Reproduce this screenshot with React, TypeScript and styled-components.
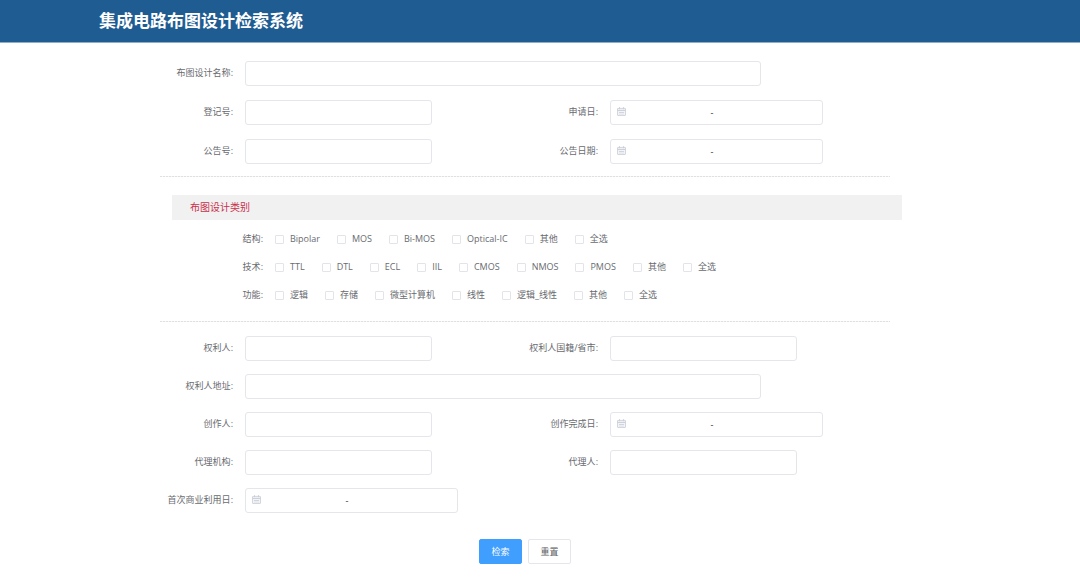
import React from "react";
import styled, { createGlobalStyle } from "styled-components";

const GlobalStyle = createGlobalStyle`
  *, *::before, *::after { box-sizing: border-box; }
  body {
    margin: 0;
    background: #fff;
    color: #696b70;
    font-family: "Open Sans", "Noto Sans CJK SC", sans-serif;
    font-size: 9px;
    line-height: 14px;
  }
  input, button { font: inherit; color: inherit; }
`;

const Header = styled.header`
  background: #1f5c92;
  border-bottom: 1px solid #8fadc8;
`;

const HeaderInner = styled.div`
  max-width: 882px;
  margin: 0 auto;
`;

const Title = styled.h1`
  margin: 0;
  color: #fff;
  font-size: 17px;
  line-height: 42px;
  font-weight: 700;
`;

const Form = styled.form`
  max-width: 884px;
  margin: 0 auto;
  padding: 18px 92px 18px 62px;
`;

const FieldGroup = styled.div<{ $gap: number }>`
  display: flex;
  flex-direction: column;
  gap: ${(p) => p.$gap}px;
`;

const FieldRow = styled.div<{ $wide?: boolean }>`
  display: grid;
  grid-template-columns: ${(p) => (p.$wide ? "1fr" : "1fr 1fr")};
`;

const Field = styled.div`
  display: grid;
  grid-template-columns: 85px minmax(0, 1fr);
  align-items: center;
`;

const FieldLabel = styled.label`
  padding: 0 12px 2px 0;
  text-align: right;
  white-space: nowrap;
`;

const TextInput = styled.input<{ $wide?: boolean }>`
  width: ${(p) => (p.$wide ? "80%" : "100%")};
  max-width: ${(p) => (p.$wide ? "none" : "187px")};
  height: 25px;
  padding: 0 9px;
  border: 1px solid #e4e6ec;
  border-radius: 3px;
  background: #fff;
  outline: none;
  &:focus { border-color: #409eff; }
`;

const RangeBox = styled.div`
  display: flex;
  align-items: center;
  width: 100%;
  max-width: 213px;
  height: 25px;
  padding: 0 24px 2px 6px;
  border: 1px solid #e4e6ec;
  border-radius: 3px;
  background: #fff;
`;

const RangeInput = styled.input`
  flex: 1;
  min-width: 0;
  padding: 0;
  border: 0;
  background: transparent;
  text-align: center;
  outline: none;
`;

const RangeSeparator = styled.span`
  width: 9px;
  padding-top: 2px;
  color: #303133;
  text-align: center;
`;

const Divider = styled.hr<{ $top: number; $bottom: number }>`
  height: 1px;
  margin: ${(p) => p.$top}px 0 ${(p) => p.$bottom}px;
  border: 0;
  background: repeating-linear-gradient(90deg, #e0e0e0 0 2px, #f6f6f6 2px 3px);
`;

const SectionTitle = styled.h2`
  margin: 0 -12px 12px 12px;
  padding-left: 18px;
  background: #f1f1f1;
  color: #c9304d;
  font-size: 10px;
  line-height: 25px;
  font-weight: 400;
`;

const OptionGroups = styled.div`
  display: flex;
  flex-direction: column;
  gap: 14px;
`;

const OptionRow = styled.div`
  display: flex;
  align-items: center;
`;

const OptionCaption = styled.span`
  width: 103px;
  margin-right: 12px;
  text-align: right;
`;

const Options = styled.div`
  display: flex;
  flex-wrap: wrap;
  column-gap: 17px;
`;

const Option = styled.label`
  display: flex;
  align-items: center;
  gap: 6px;
  white-space: nowrap;
`;

const CheckBox = styled.input`
  appearance: none;
  width: 9px;
  height: 9px;
  margin: 0;
  border: 1px solid #e2e4ea;
  border-radius: 1px;
  background: #fff;
  &:checked { background: #409eff; border-color: #409eff; }
`;

const Actions = styled.div`
  display: flex;
  justify-content: center;
  gap: 6px;
  margin-top: 26px;
`;

const ActionButton = styled.button<{ $primary?: boolean }>`
  width: 43px;
  height: 25px;
  padding: 0;
  border: 1px solid ${(p) => (p.$primary ? "#409eff" : "#e4e6ec")};
  border-radius: 2px;
  background: ${(p) => (p.$primary ? "#409eff" : "#fff")};
  color: ${(p) => (p.$primary ? "#fff" : "#606266")};
  cursor: pointer;
`;

function CalendarIcon() {
  return (
    <svg width="9" height="9" viewBox="0 0 9 9" fill="none" stroke="#c9cdd6" aria-hidden="true">
      <rect x="0.5" y="1.4" width="8" height="7.1" rx="0.5" fill="#f3f4f7" strokeWidth="0.8" />
      <path d="M0.5 3.4h8" strokeWidth="1" />
      <path d="M2.5 0.2v2M6.5 0.2v2" strokeWidth="0.9" />
      <path d="M2 5.5h5" strokeWidth="0.8" />
      <path d="M2 7.1h5" strokeWidth="0.4" />
    </svg>
  );
}

function TextField({ id, label, wide }: { id: string; label: string; wide?: boolean }) {
  return (
    <Field>
      <FieldLabel htmlFor={id}>{label}:</FieldLabel>
      <TextInput id={id} type="text" $wide={wide} />
    </Field>
  );
}

function RangeField({ id, label }: { id: string; label: string }) {
  return (
    <Field>
      <FieldLabel id={`${id}-label`} htmlFor={id}>{label}:</FieldLabel>
      <RangeBox>
        <CalendarIcon />
        <RangeInput id={id} type="text" />
        <RangeSeparator>-</RangeSeparator>
        <RangeInput type="text" aria-labelledby={`${id}-label`} />
      </RangeBox>
    </Field>
  );
}

const categories = [
  { name: "结构", options: ["Bipolar", "MOS", "Bi-MOS", "Optical-IC", "其他", "全选"] },
  { name: "技术", options: ["TTL", "DTL", "ECL", "IIL", "CMOS", "NMOS", "PMOS", "其他", "全选"] },
  { name: "功能", options: ["逻辑", "存储", "微型计算机", "线性", "逻辑_线性", "其他", "全选"] },
];

export default function App() {
  return (
    <>
      <GlobalStyle />
      <Header>
        <HeaderInner>
          <Title>集成电路布图设计检索系统</Title>
        </HeaderInner>
      </Header>
      <Form onSubmit={(e) => e.preventDefault()}>
        <FieldGroup $gap={14}>
          <FieldRow $wide>
            <TextField id="design-name" label="布图设计名称" wide />
          </FieldRow>
          <FieldRow>
            <TextField id="register-no" label="登记号" />
            <RangeField id="apply-date" label="申请日" />
          </FieldRow>
          <FieldRow>
            <TextField id="notice-no" label="公告号" />
            <RangeField id="notice-date" label="公告日期" />
          </FieldRow>
        </FieldGroup>
        <Divider $top={12} $bottom={18} />
        <SectionTitle>布图设计类别</SectionTitle>
        <OptionGroups>
          {categories.map((c) => (
            <OptionRow key={c.name} role="group" aria-label={c.name}>
              <OptionCaption>{c.name}:</OptionCaption>
              <Options>
                {c.options.map((o) => (
                  <Option key={o}>
                    <CheckBox type="checkbox" />
                    {o}
                  </Option>
                ))}
              </Options>
            </OptionRow>
          ))}
        </OptionGroups>
        <Divider $top={19} $bottom={14} />
        <FieldGroup $gap={13}>
          <FieldRow>
            <TextField id="owner" label="权利人" />
            <TextField id="owner-region" label="权利人国籍/省市" />
          </FieldRow>
          <FieldRow $wide>
            <TextField id="owner-address" label="权利人地址" wide />
          </FieldRow>
          <FieldRow>
            <TextField id="creator" label="创作人" />
            <RangeField id="finish-date" label="创作完成日" />
          </FieldRow>
          <FieldRow>
            <TextField id="agency" label="代理机构" />
            <TextField id="agent" label="代理人" />
          </FieldRow>
          <FieldRow>
            <RangeField id="first-use-date" label="首次商业利用日" />
          </FieldRow>
        </FieldGroup>
        <Actions>
          <ActionButton type="submit" $primary>检索</ActionButton>
          <ActionButton type="reset">重置</ActionButton>
        </Actions>
      </Form>
    </>
  );
}
